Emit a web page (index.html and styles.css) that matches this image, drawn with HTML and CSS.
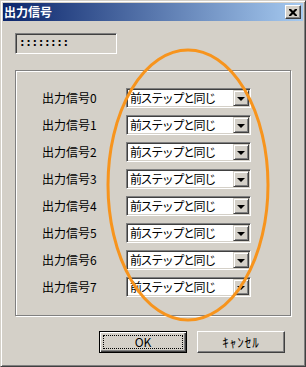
FILE: index.html
```html
<!DOCTYPE html>
<html lang="ja">
<head>
  <meta charset="UTF-8" />
  <title>出力信号</title>
  <link rel="stylesheet" href="styles.css">
</head>
<body>

  <div class="window">
    <!-- title bar -->
    <div class="titlebar">
      <span class="title">出力信号</span>
      <span class="close">
        <svg width="8" height="7" viewBox="0 0 8 7"><path d="M0 0h2l2 2 2-2h2v1l-2.5 2.5 2.5 2.5v1h-2l-2-2-2 2h-2v-1l2.5-2.5-2.5-2.5z" fill="#000"/></svg>
      </span>
    </div>

    <div class="content">
      <div class="field">::::::::</div>

      <div class="group">
        <span class="label">出力信号0</span>
        <div class="combo"><span class="combo-text">前ステップと同じ</span><span class="combo-btn"><i class="arrow"></i></span></div>
        <span class="label">出力信号1</span>
        <div class="combo"><span class="combo-text">前ステップと同じ</span><span class="combo-btn"><i class="arrow"></i></span></div>
        <span class="label">出力信号2</span>
        <div class="combo"><span class="combo-text">前ステップと同じ</span><span class="combo-btn"><i class="arrow"></i></span></div>
        <span class="label">出力信号3</span>
        <div class="combo"><span class="combo-text">前ステップと同じ</span><span class="combo-btn"><i class="arrow"></i></span></div>
        <span class="label">出力信号4</span>
        <div class="combo"><span class="combo-text">前ステップと同じ</span><span class="combo-btn"><i class="arrow"></i></span></div>
        <span class="label">出力信号5</span>
        <div class="combo"><span class="combo-text">前ステップと同じ</span><span class="combo-btn"><i class="arrow"></i></span></div>
        <span class="label">出力信号6</span>
        <div class="combo"><span class="combo-text">前ステップと同じ</span><span class="combo-btn"><i class="arrow"></i></span></div>
        <span class="label">出力信号7</span>
        <div class="combo"><span class="combo-text">前ステップと同じ</span><span class="combo-btn"><i class="arrow"></i></span></div>
      </div>

      <div class="buttons">
        <span class="btn default"><span class="focus">OK</span></span>
        <span class="btn cancel">ｷｬﾝｾﾙ</span>
      </div>
    </div>

    <!-- orange marker drawn over the dialog -->
    <svg class="marker" width="306" height="367" viewBox="0 0 306 367">
      <ellipse cx="187" cy="184" rx="80" ry="135" fill="none" stroke="#f7941d" stroke-width="3"/>
    </svg>
  </div>

</body>
</html>
```

FILE: styles.css
```css
body {
  margin: 0;
  font-family: "Noto Sans CJK JP", "Noto Sans", sans-serif;
  font-size: 12px;
  color: #000;
}

.window {
  position: relative;
  width: 306px;
  height: 367px;
  box-sizing: border-box;
  background: #d4d0c8;
  border: 1px solid;
  border-color: #d4d0c8 #404040 #404040 #d4d0c8;
  box-shadow: inset 1px 1px 0 #fff, inset -1px -1px 0 #808080;
  padding: 2px;
  overflow: hidden;
}

/* Title bar */
.titlebar {
  height: 18px;
  display: flex;
  align-items: center;
  justify-content: space-between;
  padding: 0 2px 0 1px;
  background: linear-gradient(90deg, #0a246a, #a6caf0);
}
.title {
  color: #fff;
  font-weight: bold;
  font-size: 12px;
  line-height: 18px;
}
.close {
  width: 16px;
  height: 14px;
  box-sizing: border-box;
  display: flex;
  align-items: center;
  justify-content: center;
  background: #d4d0c8;
  border: 1px solid;
  border-color: #fff #404040 #404040 #fff;
  box-shadow: inset -1px -1px 0 #808080;
}

.content {
  padding: 12px 12px 0 12px;
}

.field {
  width: 102px;
  height: 21px;
  box-sizing: border-box;
  border: 1px solid;
  border-color: #808080 #fff #fff #808080;
  box-shadow: inset 1px 1px 0 #404040, inset -1px -1px 0 #d4d0c8;
  padding: 0 0 0 3px;
  font-family: "DejaVu Sans Mono", monospace;
  font-weight: bold;
  font-size: 11px;
  line-height: 18px;
  letter-spacing: -0.4px;
}

/* Group box */
.group {
  margin-top: 16px;
  width: 276px;
  height: 246px;
  box-sizing: border-box;
  border: 1px solid #808080;
  box-shadow: 1px 1px 0 #fff, inset 1px 1px 0 #fff;
  padding: 17px 0 0 26px;
  display: grid;
  grid-template-columns: 84px 125px;
  grid-auto-rows: 20px;
  row-gap: 7px;
  align-items: center;
}
.label {
  line-height: 20px;
}

.combo {
  width: 125px;
  height: 20px;
  box-sizing: border-box;
  border: 1px solid;
  border-color: #808080 #fff #fff #808080;
  box-shadow: inset 1px 1px 0 #404040, inset -1px -1px 0 #d4d0c8;
  padding: 1px;
  display: flex;
}
.combo-text {
  flex: 1;
  background: #fff;
  padding-left: 2px;
  line-height: 16px;
  letter-spacing: -1.4px;
  white-space: nowrap;
  overflow: hidden;
}
.combo-btn {
  width: 16px;
  height: 16px;
  box-sizing: border-box;
  background: #d4d0c8;
  border: 1px solid;
  border-color: #d4d0c8 #404040 #404040 #d4d0c8;
  box-shadow: inset 1px 1px 0 #fff, inset -1px -1px 0 #808080;
  display: flex;
  align-items: center;
  justify-content: center;
}
.arrow {
  width: 0;
  height: 0;
  border-left: 4px solid transparent;
  border-right: 4px solid transparent;
  border-top: 4px solid #000;
  margin-top: 1px;
}

/* Buttons */
.buttons {
  margin-top: 15px;
  display: flex;
  justify-content: flex-end;
  gap: 10px;
  padding-right: 6px;
}
.btn {
  width: 88px;
  height: 22px;
  box-sizing: border-box;
  border: 1px solid;
  border-color: #fff #404040 #404040 #fff;
  box-shadow: inset -1px -1px 0 #808080;
  display: flex;
  align-items: center;
  justify-content: center;
  line-height: 16px;
}
.btn.cancel {
  font-size: 13px;
  letter-spacing: 1px;
}
.btn.default {
  border: 1px solid #000;
  box-shadow: inset 1px 1px 0 #fff, inset -1px -1px 0 #404040, inset -2px -2px 0 #808080;
  padding: 3px;
}
.focus {
  flex: 1;
  align-self: stretch;
  border: 1px dotted #000;
  display: flex;
  align-items: center;
  justify-content: center;
}

.marker {
  position: absolute;
  left: 0;
  top: 0;
  pointer-events: none;
}
```
